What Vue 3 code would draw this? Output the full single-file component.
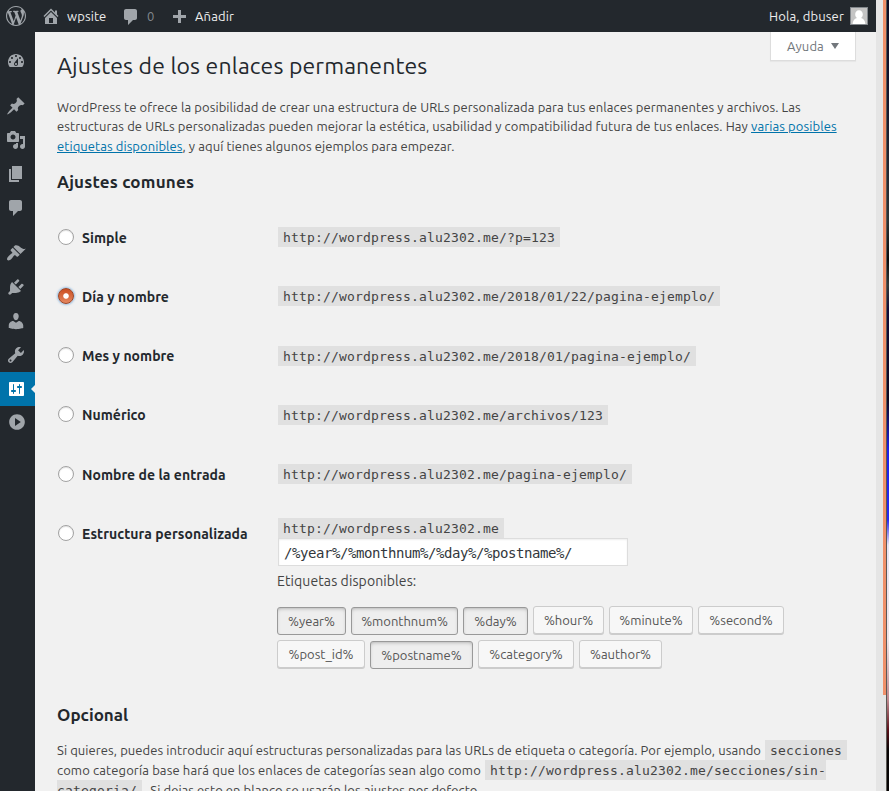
<script setup>
import { ref } from 'vue'

const menu = [
  { name: 'Escritorio', gap: true, d: 'M3.76 16h12.48c1.1-1.37 1.76-3.11 1.76-5 0-4.42-3.58-8-8-8s-8 3.58-8 8c0 1.89.66 3.63 1.76 5zM10 4c.55 0 1 .45 1 1s-.45 1-1 1-1-.45-1-1 .45-1 1-1zM6 6c.55 0 1 .45 1 1s-.45 1-1 1-1-.45-1-1 .45-1 1-1zm8 0c.55 0 1 .45 1 1s-.45 1-1 1-1-.45-1-1 .45-1 1-1zm-5.37 5.55L12 7v6c0 1.1-.9 2-2 2s-2-.9-2-2c0-.57.24-1.08.63-1.45zM4 10c.55 0 1 .45 1 1s-.45 1-1 1-1-.45-1-1 .45-1 1-1zm12 0c.55 0 1 .45 1 1s-.45 1-1 1-1-.45-1-1 .45-1 1-1zm-5 3c0-.55-.45-1-1-1s-1 .45-1 1 .45 1 1 1 1-.45 1-1z' },
  { name: 'Entradas', gap: true, d: 'M10.44 3.02l1.82-1.82 6.36 6.35-1.83 1.82c-1.05-.68-2.48-.57-3.41.36l-.75.75c-.92.93-1.04 2.35-.35 3.41l-1.83 1.82-2.41-2.41-2.8 2.79c-.42.42-3.38 2.71-3.8 2.29s1.86-3.39 2.28-3.81l2.79-2.79L4.1 9.36l1.83-1.82c1.05.69 2.48.57 3.4-.36l.75-.75c.93-.92 1.05-2.35.36-3.41z' },
  { name: 'Medios', d: 'M13 11V4c0-.55-.45-1-1-1h-1.67L9 1H5L3.67 3H2c-.55 0-1 .45-1 1v7c0 .55.45 1 1 1h10c.55 0 1-.45 1-1zM7 4.5c1.38 0 2.5 1.12 2.5 2.5S8.38 9.5 7 9.5 4.5 8.38 4.5 7 5.62 4.5 7 4.5zM14 6h5v10.5c0 1.38-1.12 2.5-2.5 2.5S14 17.88 14 16.5s1.12-2.5 2.5-2.5c.17 0 .34.02.5.05V9h-3V6zm-4 8.05V13h2v3.5c0 1.38-1.12 2.5-2.5 2.5S7 17.88 7 16.5 8.12 14 9.5 14c.17 0 .34.02.5.05z' },
  { name: 'Páginas', d: 'M6 15V2h10v13H6zm-1 1h8v2H3V5h2v11z' },
  { name: 'Comentarios', d: 'M5 2h9c1.1 0 2 .9 2 2v7c0 1.1-.9 2-2 2h-2l-5 5v-5H5c-1.1 0-2-.9-2-2V4c0-1.1.9-2 2-2z' },
  { name: 'Apariencia', gap: true, d: 'M14.48 11.06L7.41 3.99l1.5-1.5c.5-.56 2.3-.47 3.51.32 1.21.8 1.43 1.28 2.91 2.1 1.18.64 2.45 1.26 4.45.85zm-.71.71L6.7 4.7 4.93 6.47c-.39.39-.39 1.02 0 1.41l1.06 1.06c.39.39.39 1.03 0 1.42-.6.6-1.43 1.11-2.21 1.69-.35.26-.7.53-1.01.84C1.43 14.23.4 16.08 1.4 17.07c.99 1 2.84-.03 4.18-1.36.31-.31.58-.66.85-1.02.57-.78 1.08-1.61 1.69-2.21.39-.39 1.02-.39 1.41 0l1.06 1.06c.39.39 1.02.39 1.41 0z' },
  { name: 'Plugins', d: 'M13.11 4.36L9.87 7.6 8 5.73l3.24-3.24c.35-.34 1.05-.2 1.56.32.52.51.66 1.21.31 1.55zm-8 1.77l.91-1.12 9.01 9.01-1.19.84c-.71.71-2.63 1.16-3.82 1.16H6.14L4.9 17.26c-.59.59-1.54.59-2.12 0-.59-.58-.59-1.53 0-2.12l1.24-1.24v-3.88c0-1.13.4-3.19 1.09-3.89zm7.26 3.97l3.24-3.24c.34-.35 1.04-.21 1.55.31.52.51.66 1.21.31 1.55l-3.24 3.25z' },
  { name: 'Usuarios', d: 'M10 9.25c-2.27 0-2.73-3.44-2.73-3.44C7 4.02 7.82 2 9.97 2c2.16 0 2.98 2.02 2.71 3.81 0 0-.41 3.44-2.68 3.44zm0 2.57L12.72 10c2.39 0 4.52 2.33 4.52 4.53v2.49s-3.65 1.13-7.24 1.13c-3.65 0-7.24-1.13-7.24-1.13v-2.49c0-2.25 1.94-4.48 4.47-4.48z' },
  { name: 'Herramientas', d: 'M16.68 9.77c-1.34 1.34-3.3 1.67-4.95.99l-5.41 6.52c-.99.99-2.59.99-3.58 0s-.99-2.59 0-3.57l6.52-5.42c-.68-1.65-.35-3.61.99-4.95 1.28-1.28 3.12-1.62 4.72-1.06l-2.89 2.89 2.82 2.82 2.86-2.87c.53 1.58.18 3.39-1.08 4.65zM3.81 16.21c.4.39 1.04.39 1.43 0 .4-.4.4-1.04 0-1.43-.39-.4-1.03-.4-1.43 0-.39.39-.39 1.03 0 1.43z' },
  { name: 'Ajustes', active: true, d: 'M18 16V4c0-.55-.45-1-1-1H4c-.55 0-1 .45-1 1v12c0 .55.45 1 1 1h13c.55 0 1-.45 1-1zM8 11h1c.55 0 1 .45 1 1s-.45 1-1 1H8v1.5c0 .28-.22.5-.5.5s-.5-.22-.5-.5V13H6c-.55 0-1-.45-1-1s.45-1 1-1h1V5.5c0-.28.22-.5.5-.5s.5.22.5.5V11zm5-2h-1c-.55 0-1-.45-1-1s.45-1 1-1h1V5.5c0-.28.22-.5.5-.5s.5.22.5.5V7h1c.55 0 1 .45 1 1s-.45 1-1 1h-1v5.5c0 .28-.22.5-.5.5s-.5-.22-.5-.5V9z' },
  { name: 'Cerrar menú', collapse: true, d: 'M10 2.16c4.33 0 7.84 3.51 7.84 7.84s-3.51 7.84-7.84 7.84S2.16 14.33 2.16 10 5.71 2.16 10 2.16zm-2 3.96v7.76L13.82 10z' },
]

const base = 'http://wordpress.alu2302.me'
const options = [
  { label: 'Simple', url: base + '/?p=123' },
  { label: 'Día y nombre', url: base + '/2018/01/22/pagina-ejemplo/' },
  { label: 'Mes y nombre', url: base + '/2018/01/pagina-ejemplo/' },
  { label: 'Numérico', url: base + '/archivos/123' },
  { label: 'Nombre de la entrada', url: base + '/pagina-ejemplo/' },
]
const selected = ref('Día y nombre')
const structure = ref('/%year%/%monthnum%/%day%/%postname%/')

const tagRows = [
  [
    { t: '%year%', w: 69, on: true },
    { t: '%monthnum%', w: 107, on: true },
    { t: '%day%', w: 65, on: true },
    { t: '%hour%', w: 71 },
    { t: '%minute%', w: 84 },
    { t: '%second%', w: 86 },
  ],
  [
    { t: '%post_id%', w: 88 },
    { t: '%postname%', w: 103, on: true },
    { t: '%category%', w: 96 },
    { t: '%author%', w: 83 },
  ],
]
</script>

<template>
  <div class="screen">
    <div class="page">
      <header class="bar">
        <svg class="wp" viewBox="0 0 20 20"><path d="M20 10c0-5.51-4.49-10-10-10C4.48 0 0 4.49 0 10c0 5.52 4.48 10 10 10 5.51 0 10-4.48 10-10zM7.78 15.37L4.37 6.22c.55-.02 1.17-.08 1.17-.08.5-.06.44-1.13-.06-1.11 0 0-1.45.11-2.37.11-.18 0-.37 0-.58-.01C4.12 2.69 6.87 1.11 10 1.11c2.33 0 4.45.87 6.05 2.34-.68-.11-1.65.39-1.65 1.58 0 .74.45 1.36.9 2.1.35.61.55 1.36.55 2.46 0 1.49-1.4 5-1.4 5l-3.03-8.37c.54-.02.82-.17.82-.17.5-.05.44-1.25-.06-1.22 0 0-1.44.12-2.38.12-.87 0-2.33-.12-2.33-.12-.5-.03-.56 1.2-.06 1.22l.92.08 1.26 3.41zM17.41 10c.24-.64.74-1.87.43-4.25.7 1.29 1.05 2.71 1.05 4.25 0 3.29-1.73 6.24-4.4 7.78.97-2.59 1.94-5.2 2.92-7.78zM6.1 18.09C3.12 16.65 1.11 13.53 1.11 10c0-1.3.23-2.48.72-3.59C3.25 10.3 4.67 14.2 6.1 18.09zm4.03-6.63l2.58 6.98c-.86.29-1.76.45-2.71.45-.79 0-1.57-.11-2.29-.33.81-2.38 1.62-4.74 2.42-7.1z" /></svg>
        <svg class="home" viewBox="0 0 20 20"><path d="M16 8.5l1.53 1.53-1.06 1.06L10 4.6l-6.47 6.49-1.06-1.06L10 2.5l4 4v-2h2v4zm-6-2.46l6 5.99V18H4v-5.97zM12 17v-5H8v5h4z" /></svg>
        <span class="site">wpsite</span>
        <svg class="bubble" viewBox="0 0 20 20"><path d="M5 2h9c1.1 0 2 .9 2 2v7c0 1.1-.9 2-2 2h-2l-5 5v-5H5c-1.1 0-2-.9-2-2V4c0-1.1.9-2 2-2z" /></svg>
        <span class="count">0</span>
        <svg class="plus" viewBox="0 0 20 20"><path d="M17 7v3h-5v5H9v-5H4V7h5V2h3v5h5z" /></svg>
        <span class="add">Añadir</span>
        <span class="hello">Hola, dbuser</span>
        <svg class="avatar" viewBox="0 0 18 18">
          <rect width="18" height="18" fill="#82878c" />
          <rect x="1" y="1" width="16" height="16" fill="#c4c4c4" />
          <path fill="#fff" d="M9 3.2c2.3 0 3.8 1.7 3.8 4 0 1.7-.7 3-1.7 3.8 2.5.7 4 2.7 4.3 6H2.6c.3-3.3 1.8-5.3 4.3-6-1-.8-1.7-2.1-1.7-3.8 0-2.3 1.5-4 3.8-4z" />
        </svg>
      </header>

      <div class="body">
        <nav class="menu">
          <a
            v-for="m in menu"
            :key="m.name"
            :class="{ spaced: m.gap, active: m.active, collapse: m.collapse }"
            :aria-label="m.name"
          >
            <svg viewBox="0 0 20 20"><path :d="m.d" /></svg>
          </a>
        </nav>

        <main>
          <div class="help">Ayuda<i></i></div>
          <h1>Ajustes de los enlaces permanentes</h1>
          <p class="intro">
            <span class="line">WordPress te ofrece la posibilidad de crear una estructura de URLs personalizada para tus enlaces permanentes y archivos. Las</span>
            <span class="line">estructuras de URLs personalizadas pueden mejorar la estética, usabilidad y compatibilidad futura de tus enlaces. Hay <a>varias posibles</a></span>
            <span class="line l3"><a>etiquetas disponibles</a>, y aquí tienes algunos ejemplos para empezar.</span>
          </p>
          <h2>Ajustes comunes</h2>

          <div class="options">
            <div v-for="o in options" :key="o.label" class="option">
              <label @click="selected = o.label">
                <span class="radio" :class="{ checked: selected === o.label }"></span>{{ o.label }}
              </label>
              <code>{{ o.url }}</code>
            </div>
          </div>
          <div class="custom">
            <label @click="selected = 'custom'">
              <span class="radio" :class="{ checked: selected === 'custom' }"></span>Estructura personalizada
            </label>
            <div class="fields">
              <code>{{ base }}</code>
              <input v-model="structure" type="text" spellcheck="false" />
              <p class="avail">Etiquetas disponibles:</p>
              <div v-for="(row, i) in tagRows" :key="i" class="tags">
                <button
                  v-for="b in row"
                  :key="b.t"
                  :class="{ on: b.on }"
                  :style="{ width: b.w + 'px' }"
                >{{ b.t }}</button>
              </div>
            </div>
          </div>

          <h2 class="opt">Opcional</h2>
          <p class="outro">
            <span class="line o1">Si quieres, puedes introducir aquí estructuras personalizadas para las URLs de etiqueta o categoría. Por ejemplo, usando <code>secciones</code></span>
            <span class="line o2">como categoría base hará que los enlaces de categorías sean algo como <code class="open-end">{{ base }}/secciones/sin-</code></span>
            <span class="line o3"><code class="open-start">categoria/</code> . Si dejas esto en blanco se usarán los ajustes por defecto.</span>
          </p>
        </main>
      </div>
    </div>
    <div class="scroll"><div class="thumb"></div></div>
    <div class="edge"></div>
    <div class="desktop"></div>
  </div>
</template>

<style>
body { margin: 0; overflow: hidden; }
</style>

<style scoped>
* { box-sizing: border-box; }
.screen {
  display: flex;
  width: 889px;
  height: 791px;
  overflow: hidden;
  background: #f1f1f1;
  color: #444;
  font: 13px/20px Ubuntu, "Noto Sans", sans-serif;
}
.page { width: 876px; height: 791px; overflow: hidden; }
.scroll { width: 10px; background: #e5e5e5; }
.thumb { width: 3px; height: 695px; margin-left: 7px; background: #f0906a; }
.edge { width: 1px; background: #5a5854; }
.desktop {
  width: 2px;
  background: linear-gradient(#0b0d26 0, #12122c 80px, #2d3436 220px, #0a0a0c 260px, #333a3a 285px, #120a38 310px, #0d0820 400px, #2020e8 450px, #2a2af0 520px, #e8e4f4 545px, #efe2e6 640px, #c08a90 700px, #5a1018 730px, #080404 750px, #050303 791px);
}

.bar {
  display: flex;
  align-items: flex-start;
  height: 32px;
  padding: 0 8px 0 6px;
  background: #23282d;
  color: #eee;
  line-height: 32px;
}
.bar span { white-space: nowrap; }
.bar svg { width: 20px; height: 20px; fill: #a0a5aa; flex: none; }
.bar .wp { margin-top: 6px; }
.bar .home { margin: 6px 0 0 15px; }
.site { width: 54px; margin-left: 6px; letter-spacing: .1px; }
.bar .bubble { margin-top: 7px; }
.count { width: 22px; margin-left: 6px; color: #82878c; }
.bar .plus { margin-top: 8px; }
.add { margin-left: 6px; letter-spacing: .15px; }
.hello { margin-left: auto; letter-spacing: .14px; }
.bar .avatar { width: 18px; height: 18px; margin: 7px 0 0 6px; }

.body { display: flex; height: 759px; }
.menu { width: 35px; padding-top: 1px; background: #23282d; flex: none; }
.menu a { display: flex; height: 34px; padding: 7px 0 0 6px; position: relative; }
.menu a.spaced { margin-top: 11px; }
.menu svg { width: 20px; height: 20px; fill: #a0a5aa; }
.menu .active { background: #0073aa; }
.menu .active svg { fill: #fff; }
.menu .active::after {
  content: "";
  position: absolute;
  right: 0;
  top: 13px;
  border: solid transparent;
  border-width: 4px 4px 4px 0;
  border-right-color: #f1f1f1;
}
.menu .collapse { padding: 6px 0 0 7px; }

main { width: 841px; padding: 0 20px 0 22px; }
.help {
  display: flex;
  align-items: center;
  width: 86px;
  height: 29px;
  margin-left: auto;
  padding-left: 16px;
  border: 1px solid #ddd;
  border-top: 0;
  background: #fff;
  box-shadow: 0 1px 1px rgba(0, 0, 0, .04);
  color: #72777c;
  letter-spacing: .1px;
}
.help i {
  margin-left: 7px;
  border: solid transparent;
  border-width: 6px 4.5px 0;
  border-top-color: #72777c;
}
h1 {
  margin: -10px 0 0;
  color: #23282d;
  font-size: 23px;
  font-weight: 400;
  line-height: 29px;
  letter-spacing: .125px;
  white-space: nowrap;
}
p { margin: 0; }
.line { display: block; white-space: nowrap; }
.intro { margin-top: 17.7px; line-height: 19.5px; letter-spacing: .09px; }
.l3 { letter-spacing: .07px; }
.intro a { color: #0073aa; text-decoration: underline; }
h2 {
  margin: 15.7px 0 0;
  color: #23282d;
  font-size: 17px;
  font-weight: 700;
  line-height: 20px;
  letter-spacing: .2px;
}
.options { padding-top: 15px; }
.option { display: grid; grid-template-columns: 221px 1fr; align-items: center; height: 59.25px; padding-top: 2px; }
label {
  display: flex;
  align-items: flex-start;
  height: 20px;
  color: #23282d;
  font-size: 14px;
  font-weight: 700;
  line-height: 22px;
  letter-spacing: .03px;
  white-space: nowrap;
}
.radio {
  width: 16px;
  height: 16px;
  margin: 2px 8px 0 1px;
  border: 1px solid #a2a2a2;
  border-radius: 50%;
  background: #fff;
  box-shadow: inset 0 1px 1px rgba(0, 0, 0, .12);
}
.radio.checked {
  border-color: #96452a;
  background: radial-gradient(circle at 50% 50%, #fff 0, #fff 2.3px, transparent 3.2px), linear-gradient(#cc4f22, #e5875f);
  box-shadow: 0 0 2px 1px rgba(91, 157, 217, .6);
}
code {
  display: inline-block;
  justify-self: start;
  height: 20px;
  padding: 0 5px;
  background: #e0e0e0;
  color: #444;
  font: 13px/21px "DejaVu Sans Mono", monospace;
  letter-spacing: .174px;
}
.option code { margin-top: -1px; }
.option label { margin-top: -1.6px; }
.custom { display: grid; grid-template-columns: 221px 1fr; padding-top: 14.85px; }
.custom label { margin-top: 5px; letter-spacing: .07px; }
.fields { display: flex; flex-direction: column; align-items: flex-start; }
input {
  width: 350px;
  height: 28px;
  padding: 4px 5px 2px;
  border: 1px solid #ddd;
  outline: 0;
  background: #fff;
  box-shadow: inset 0 1px 2px rgba(0, 0, 0, .07);
  color: #32373c;
  font: 14px/20px "DejaVu Sans Mono", monospace;
  letter-spacing: -.43px;
}
.avail { margin: 5px 0 0 -1px; font-size: 14px; letter-spacing: .1px; }
.tags { display: flex; gap: 5px; height: 34px; margin-left: -1px; }
.avail + .tags { margin-top: 15px; }
button {
  height: 28px;
  padding: 0;
  border: 1px solid #ccc;
  border-radius: 3px;
  background: #f7f7f7;
  box-shadow: 0 1px 0 #ccc;
  color: #555;
  font: inherit;
  line-height: 26px;
  text-align: center;
  white-space: nowrap;
}
button.on {
  margin-top: 1px;
  border-color: #999;
  background: #eee;
  box-shadow: inset 0 2px 5px -3px rgba(0, 0, 0, .5);
}
.opt { margin-top: 31px; letter-spacing: 0; }
.outro { margin-top: 15px; }
.outro .line { height: 20px; }
.outro code { margin: 0 1px; vertical-align: top; }
.o1 { letter-spacing: .077px; }
.o2 { letter-spacing: .13px; }
.o3 { letter-spacing: .06px; }
.outro .open-end { padding-right: 0; }
.outro .open-start { margin: 0 -1px 0 0; padding-left: 0; }
</style>
